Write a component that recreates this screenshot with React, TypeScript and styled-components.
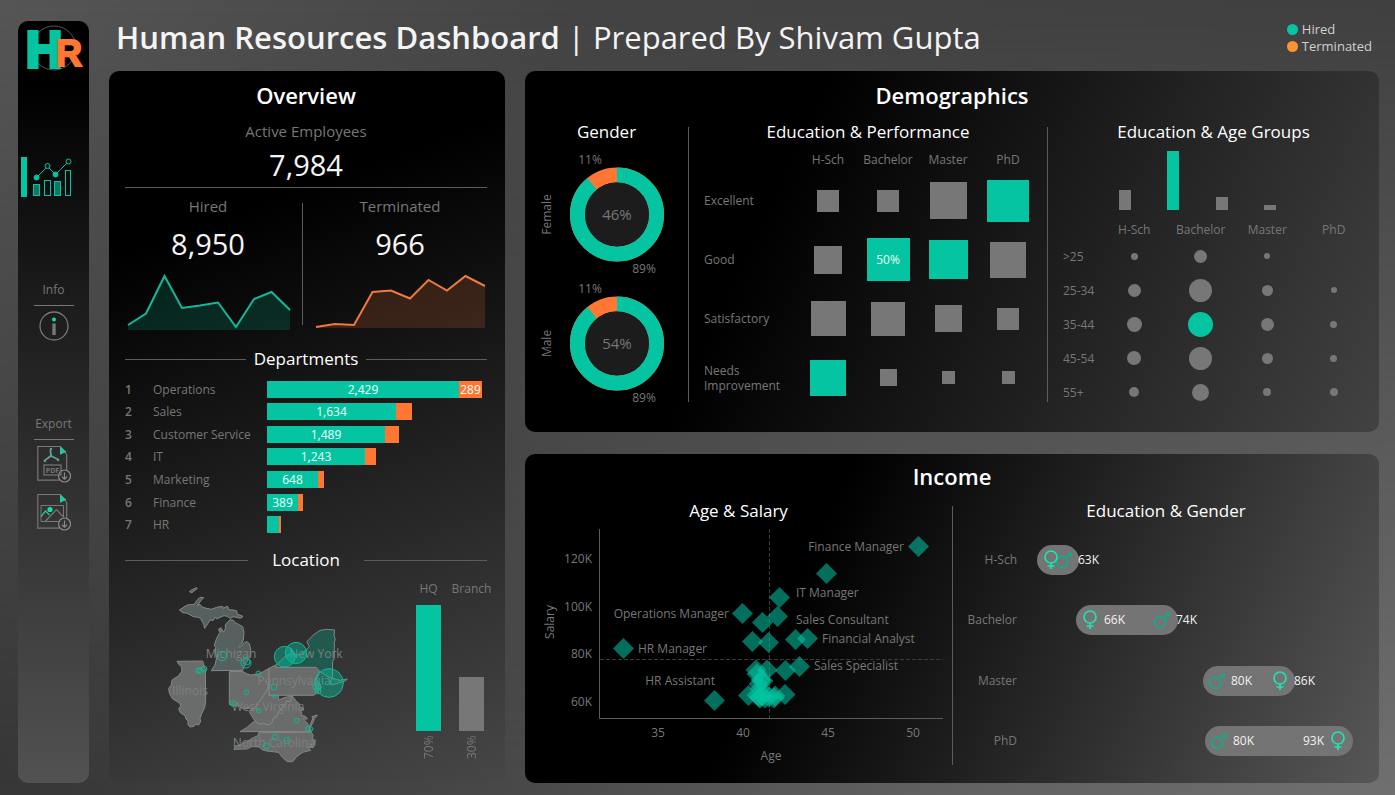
import React from "react";
import styled, { createGlobalStyle } from "styled-components";

const TEAL = "#04c4a1";
const ORANGE = "#ff7733";
const GREY = "#777777";
const RULE = "#5c5c5c";
const FONT = '"Open Sans", "Noto Sans", sans-serif';

const GlobalStyle = createGlobalStyle`
  *, *::before, *::after { box-sizing: border-box; }
  body {
    margin: 0;
    font-family: ${FONT};
    font-size: 12px;
    color: ${GREY};
    background: #444;
  }
  h1, h2, h3, p, ol, ul { margin: 0; padding: 0; font-weight: 400; }
  svg text { font-family: ${FONT}; }
`;

/* ---------- page frame ---------- */

const Page = styled.div`
  position: relative;
  display: grid;
  grid-template-columns: 71px minmax(0, 1fr);
  column-gap: 20px;
  min-height: 100vh;
  padding: 0 16px 12px 18px;
  background: linear-gradient(to right, #565656, #444 40%, #404040);
  isolation: isolate;

  &::before {
    content: "";
    position: absolute;
    inset: 0;
    z-index: -1;
    background: linear-gradient(to right, #363636, #484848 36%, #606060 65%, #707070);
    mask-image: linear-gradient(to bottom, transparent, #000);
  }
`;

const Main = styled.main`
  display: flex;
  flex-direction: column;
`;

const Header = styled.header`
  display: flex;
  justify-content: space-between;
  align-items: flex-start;
  height: 71px;
  padding: 0 7px;
`;

const PageTitle = styled.h1`
  font-size: 31px;
  line-height: 74px;
  color: #f4f4f4;
  white-space: nowrap;

  strong { font-weight: 600; }
`;

const Legend = styled.ul`
  list-style: none;
  padding-top: 21px;
`;

const LegendItem = styled.li<{ $color: string }>`
  display: flex;
  align-items: center;
  gap: 4px;
  line-height: 17px;
  font-size: 13px;
  color: #d0d0d0;

  &::before {
    content: "";
    width: 11px;
    height: 11px;
    border-radius: 50%;
    background: ${(p) => p.$color};
  }
`;

const Board = styled.div`
  flex: 1;
  display: grid;
  grid-template-columns: minmax(0, 396fr) minmax(0, 854fr);
  column-gap: 20px;
`;

const RightSide = styled.div`
  display: grid;
  grid-template-rows: 361fr 329fr;
  row-gap: 22px;
`;

const Panel = styled.section<{ $bg: string }>`
  display: flex;
  flex-direction: column;
  border-radius: 10px;
  background: ${(p) => p.$bg};
`;

const OverviewPanel = styled(Panel)`
  padding: 0 18px 0 16px;
`;

const PanelTitle = styled.h2<{ $line: number }>`
  font-size: 22px;
  font-weight: 600;
  line-height: ${(p) => p.$line}px;
  text-align: center;
  color: #fff;
`;

const SectionTitle = styled.h3`
  font-size: 17px;
  font-weight: 500;
  line-height: 26px;
  text-align: center;
  color: #fff;
`;

const PanelBody = styled.div<{ $columns: string }>`
  flex: 1;
  display: grid;
  grid-template-columns: ${(p) => p.$columns};
`;

const Divider = styled.div<{ $bottom: number }>`
  margin: 8px 0 ${(p) => p.$bottom}px;
  background: ${RULE};
`;

const Chart = styled.svg`
  display: block;
  width: 100%;
`;

/* ---------- sidebar ---------- */

const Sidebar = styled.nav`
  display: flex;
  flex-direction: column;
  align-items: center;
  margin-top: 21px;
  border-radius: 10px;
  background: linear-gradient(to bottom, #000 8%, #1a1a1a 35%, #2b2b2b 55%, #3c3c3c 75%, #525252);
`;

const LogoMark = styled.svg`
  display: block;
  overflow: visible;

  text {
    font-family: "Liberation Sans", sans-serif;
    font-weight: 700;
  }
`;

const IconButton = styled.button`
  display: block;
  padding: 0;
  border: 0;
  background: none;
  cursor: pointer;

  svg { display: block; }
`;

const NavButton = styled(IconButton)`
  align-self: stretch;
  display: flex;
  align-items: center;
  gap: 5px;
  margin: 78px 0 81px 3px;

  &::before {
    content: "";
    width: 6px;
    height: 40px;
    background: ${TEAL};
  }
`;

const NavLabel = styled.p`
  width: 40px;
  height: 28px;
  margin-bottom: 5px;
  border-bottom: 1px solid ${GREY};
  line-height: 23px;
  text-align: center;
`;

const NavGroup = styled.div`
  display: flex;
  flex-direction: column;
  align-items: center;
  margin-bottom: 71px;
`;

const ExportButtons = styled.div`
  display: grid;
  gap: 10px;
`;

/* ---------- overview ---------- */

const Kpi = styled.div`
  text-align: center;
`;

const KpiLabel = styled.p`
  font-size: 15px;
  line-height: 24px;
`;

const KpiValue = styled.p<{ $line: number }>`
  font-size: 29px;
  line-height: ${(p) => p.$line}px;
  color: #f5f5f5;
`;

const KpiSplit = styled.div`
  display: grid;
  grid-template-columns: minmax(0, 166fr) 22px minmax(0, 174fr);
  margin-bottom: 14px;
  padding-top: 6px;
  border-top: 1px solid ${RULE};
`;

const KpiDivider = styled.div`
  width: 1px;
  margin: 9px auto 6px;
  background: ${RULE};
`;

const RuledTitle = styled.h3<{ $gap: number }>`
  display: grid;
  grid-template-columns: 1fr auto 1fr;
  align-items: center;
  gap: ${(p) => p.$gap}px;
  font-size: 17px;
  font-weight: 500;
  line-height: 28px;
  color: #fff;

  &::before, &::after {
    content: "";
    height: 1px;
    background: ${RULE};
  }
`;

const Departments = styled.ol`
  display: grid;
  grid-auto-rows: 1fr;
  height: 158px;
  margin: 5px 0 10px;
  list-style: none;
`;

const Department = styled.li`
  display: grid;
  grid-template-columns: 28px 114px 1fr;
  align-items: center;
`;

const Rank = styled.span`
  font-weight: 600;
`;

const Bar = styled.div`
  display: flex;
  height: 17px;
  line-height: 17px;
`;

const Segment = styled.span<{ $color: string }>`
  background: ${(p) => p.$color};
  color: #f0fffb;
  text-align: center;
`;

const LocationRow = styled.div`
  display: grid;
  grid-template-columns: minmax(0, 1fr) 86px;
  margin-right: -6px;
`;

const SiteBars = styled.div`
  display: grid;
  grid-template-columns: 1fr 1fr;
  justify-items: center;
`;

const SiteColumn = styled.div`
  display: grid;
  grid-template-rows: 31px 126px 30px;
  justify-items: center;
  line-height: 29px;
`;

const SiteBar = styled.div<{ $color: string }>`
  align-self: end;
  width: 25px;
  background: ${(p) => p.$color};
`;

const SiteShare = styled.span`
  writing-mode: vertical-rl;
  transform: rotate(180deg);
  text-align: right;
  padding-bottom: 4px;
`;

/* ---------- demographics ---------- */

const Donuts = styled.div`
  margin-top: 5px;
`;

const PerformanceTable = styled.table`
  width: calc(100% - 24px);
  margin: 4px 9px 0 15px;
  border-collapse: collapse;
  table-layout: fixed;

  th, td { padding: 0; height: 59px; }
  th { font-weight: 400; text-align: left; line-height: 15px; }
  thead th { height: 22px; text-align: center; line-height: 22px; }
  thead th:first-child { width: 94px; }
`;

const Square = styled.div<{ $size: number; $active: boolean }>`
  width: ${(p) => p.$size}px;
  height: ${(p) => p.$size}px;
  margin: 0 auto;
  background: ${(p) => (p.$active ? TEAL : GREY)};
  color: #e6fff9;
  display: grid;
  place-items: center;
`;

const AgeBars = styled.div`
  display: grid;
  grid-template-columns: repeat(4, 1fr);
  align-items: end;
  justify-items: center;
  height: 65px;
  margin: 0 85px 0 53px;
`;

const AgeBar = styled.div<{ $height: number; $active: boolean }>`
  width: 12px;
  height: ${(p) => p.$height}px;
  background: ${(p) => (p.$active ? TEAL : GREY)};
`;

const AgeTable = styled.table`
  width: calc(100% - 27px);
  margin: 7px 12px 0 15px;
  border-collapse: collapse;
  table-layout: fixed;

  th, td { padding: 0; height: 34px; }
  th { font-weight: 400; text-align: left; }
  thead th { height: 22px; text-align: center; vertical-align: bottom; line-height: 18px; }
  thead th:first-child { width: 38px; }
`;

const Dot = styled.div<{ $size: number; $active: boolean }>`
  width: ${(p) => p.$size}px;
  height: ${(p) => p.$size}px;
  margin: 0 auto;
  border-radius: 50%;
  background: ${(p) => (p.$active ? TEAL : GREY)};
`;

/* ---------- data ---------- */

const hiredTrend = "128,325 146,313.5 164.5,276 182,308 200,305.5 218,302.5 236,327 254,299 271.5,292 290,310";
const firedTrend = "316,327 335,324 354,325 372.5,292 391,290.5 410,298.5 428.5,280 447,290.5 465.5,276 485,286";

const departments = [
  { name: "Operations", hired: 192, gone: 23, label: "2,429", goneLabel: "289" },
  { name: "Sales", hired: 129, gone: 16, label: "1,634" },
  { name: "Customer Service", hired: 118, gone: 14, label: "1,489" },
  { name: "IT", hired: 98, gone: 11, label: "1,243" },
  { name: "Marketing", hired: 51, gone: 6, label: "648" },
  { name: "Finance", hired: 31, gone: 5, label: "389" },
  { name: "HR", hired: 12, gone: 2, label: "" },
];

const levels = ["H-Sch", "Bachelor", "Master", "PhD"];

const performance = [
  { name: "Excellent", sizes: [22, 22, 37, 42], active: [3] },
  { name: "Good", sizes: [28, 43, 39, 36], active: [1, 2] },
  { name: "Satisfactory", sizes: [35, 34, 27, 22], active: [] },
  { name: "Needs Improvement", sizes: [36, 17, 13, 13], active: [0] },
] as { name: string; sizes: number[]; active: number[] }[];

const ages = [
  { name: ">25", sizes: [7, 13, 6, 0] },
  { name: "25-34", sizes: [13, 23, 11, 6] },
  { name: "35-44", sizes: [15, 25, 13, 7] },
  { name: "45-54", sizes: [14, 23, 11, 7] },
  { name: "55+", sizes: [10, 17, 8, 8] },
];

const jobs = [
  [918.5, 546.5], [826.5, 573.5], [779.5, 597.5], [742.5, 613.5], [762.5, 622.5], [777.5, 616.5],
  [752.5, 641.5], [768.5, 642.5], [795.5, 639.5], [807.5, 638.5], [623.5, 648.5], [799.5, 666.5],
  [785.5, 670.5], [767, 670], [714.5, 700.5], [785, 694.5], [748.5, 695.5], [756, 670], [757, 674],
  [761, 680], [763, 681], [759, 684], [760, 689], [757, 695], [759, 697], [760, 698], [762, 696],
  [765, 698], [769, 697], [774, 698], [775, 696],
];

const jobLabels = [
  { text: "Finance Manager", x: 904, y: 547, end: true },
  { text: "IT Manager", x: 796, y: 593 },
  { text: "Operations Manager", x: 729, y: 614, end: true },
  { text: "Sales Consultant", x: 796, y: 620 },
  { text: "Financial Analyst", x: 822, y: 639 },
  { text: "HR Manager", x: 638, y: 649 },
  { text: "Sales Specialist", x: 814, y: 666 },
  { text: "HR Assistant", x: 715, y: 681, end: true },
];

const salaryTicks = [
  { t: "120K", y: 563 },
  { t: "100K", y: 611 },
  { t: "80K", y: 658 },
  { t: "60K", y: 706 },
];

const pay = [
  { name: "H-Sch", y: 560, x: 1037, w: 42, f: 1051, m: 1064, labels: [{ t: "63K", x: 1078 }] },
  { name: "Bachelor", y: 620, x: 1076, w: 102, f: 1090, m: 1162, labels: [{ t: "66K", x: 1104 }, { t: "74K", x: 1176 }] },
  { name: "Master", y: 681, x: 1203, w: 92, f: 1280, m: 1217, labels: [{ t: "80K", x: 1231 }, { t: "86K", x: 1294 }] },
  { name: "PhD", y: 741, x: 1205, w: 148, f: 1338, m: 1219, labels: [{ t: "80K", x: 1233 }, { t: "93K", x: 1303 }] },
];

/* ---------- drawings ---------- */

const Logo = () => (
  <LogoMark width="62" height="58" viewBox="22 21 62 58" role="img" aria-label="HR">
    <circle cx="53" cy="48" r="22" fill="none" stroke="#555" />
    <text x="25" y="67" fontSize="50" fill={TEAL} stroke={TEAL} strokeWidth="4">H</text>
    <text x="55" y="66" fontSize="36" fill={ORANGE} stroke={ORANGE} strokeWidth="2">R</text>
  </LogoMark>
);

const AnalyticsIcon = () => (
  <svg width="40" height="40" viewBox="33 157 40 40" fill="none" stroke={TEAL}>
    <path d="M37.5 177.5 48.5 166.5 56.5 174.5 69.5 161.5" />
    <circle cx="37.5" cy="177.5" r="2.5" fill={TEAL} />
    <circle cx="48.5" cy="166" r="2.5" fill="#111" />
    <circle cx="56.5" cy="174.5" r="2.5" fill={TEAL} />
    <circle cx="69.5" cy="161.5" r="2.5" fill="#111" />
    <rect x="34.5" y="184.5" width="6" height="11" fill="#087a66" />
    <rect x="45.5" y="180.5" width="6" height="15" />
    <rect x="55.5" y="181.5" width="6" height="14" fill="#087a66" />
    <rect x="66.5" y="170.5" width="5" height="25" />
  </svg>
);

const InfoIcon = () => (
  <svg width="30" height="30" viewBox="0 0 30 30">
    <circle cx="15" cy="15" r="14" fill="none" stroke={GREY} strokeWidth="1.3" />
    <circle cx="15" cy="8.5" r="2" fill="#14d9ae" />
    <path d="M13.3 12.5h3.4V24h-3.4z" fill={GREY} />
  </svg>
);

const FileFrame = () => (
  <>
    <path d="M23.500 1.500H.8v33.700h21.500M23.500 1.500l6.200 8V25" fill="none" stroke={GREY} strokeWidth="1.2" />
    <path d="M23 1.500v8.300l6.500-3z" fill="#20c99f" />
    <circle cx="27.5" cy="31" r="6" fill="none" stroke="#8a8a8a" strokeWidth="1.2" />
    <path d="M27.5 27.5v6.5M25 31.8l2.5 2.4 2.5-2.4" fill="none" stroke="#8a8a8a" strokeWidth="1.2" />
  </>
);

const PdfIcon = () => (
  <svg width="34" height="38" viewBox="0 0 34 38">
    <FileFrame />
    <path d="M14 4c-1.5 1.5 0 3 0 6.5C12.5 13 8.500 13.5 7.5 16M14 10.5c2 2.5 5.5 2 7.5 4.5" fill="none" stroke="#5fa593" strokeWidth="1.8" />
    <circle cx="14" cy="4" r="1.2" fill="#5fa593" />
    <circle cx="7.8" cy="16" r="1.2" fill="#5fa593" />
    <circle cx="21" cy="15" r="1.2" fill="#5fa593" />
    <rect x="7" y="20" width="17" height="10" fill="none" stroke={GREY} strokeWidth="1.2" />
    <text x="15.5" y="27.5" fontSize="7" fontWeight="700" textAnchor="middle" fill={GREY}>PDF</text>
  </svg>
);

const ImageIcon = () => (
  <svg width="34" height="38" viewBox="0 0 34 38">
    <FileFrame />
    <path d="M22 28.5H4v-16h22.500v12" fill="none" stroke={GREY} />
    <path d="m8 28.5 11.5-12 6.5 7" fill="none" stroke={GREY} strokeWidth="1.2" />
    <path d="m4 23.5 4.5-5.500 4 4" fill="none" stroke="#20c99f" strokeWidth="1.2" />
    <circle cx="13" cy="16.5" r="2.6" fill="#20d9ae" />
  </svg>
);

const states = [
  "238,195 255,184 262,180 282,178 292,165 300,157 311,158 304,165 292,182 300,178 308,187 320,190 334,193 350,187 368,184 370,190 378,185 384,185 386,194 400,195 410,198 412,208 428,213 426,218 418,219 400,215 390,220 382,214 372,212 358,218 350,222 346,216 340,226 330,225 324,235 314,250 311,238 308,232 302,221 295,217 280,215 262,205 248,203",
  "268,140 274,135 290,128 292,130 276,143",
  "382,232 392,224 400,226 404,232 412,236 428,245 432,262 430,285 424,298 416,304 418,308 426,302 430,295 434,292 442,290 448,296 452,312 452,330 446,340 440,352 432,365 428,376 334,377 345,360 350,338 345,318 347,308 343,300 350,280 360,262 366,252 370,262 376,252 376,240",
  "356,252 364,248 358,260",
  "231,349 308,348 312,362 316,372 317,470 314,488 308,500 300,520 302,530 296,540 285,538 282,544 270,546 264,540 264,528 258,522 255,512 240,502 236,490 242,484 240,476 232,470 218,462 208,445 206,430 214,420 216,405 236,392 246,378 244,364 236,358",
  "388,380 428,379 440,386 452,390 470,388 490,380 507,370 507,412 502,435 490,452 480,468 470,478 468,488 455,494 448,490 430,492 418,484 404,482 388,478",
  "507,370 528,360 528,367 648,367 658,378 656,390 648,402 660,418 664,428 650,445 640,451 507,451",
  "507,412 507,451 536,451 536,466 552,458 566,455 574,452 582,462 572,470 560,468 550,488 535,500 530,515 520,520 516,532 508,540 490,536 480,538 466,530 455,512 448,500 452,494 468,488 470,478 480,468 490,452 502,435",
  "576,452 582,460 590,470 598,476 598,484 612,492 602,498 606,505 602,510 616,514 622,522 610,522 618,530 626,540 630,548 634,559 420,560 440,548 458,532 466,530 480,538 490,536 508,540 516,532 520,520 530,515 535,500 550,488 560,468 572,470",
  "636,515 652,510 644,520 640,530 632,545 630,540 638,522",
  "476,563 634,562 640,572 636,580 646,586 644,602 632,598 640,608 624,606 632,616 608,622 590,635 578,650 562,650 548,638 535,622 500,618 486,614 478,606 455,605 440,612 402,613 405,604 418,600 440,590 460,578 474,572",
];

const branches = [
  [366, 333, 14], [438, 354, 15], [440, 350, 10], [294, 377, 7], [300, 377, 9], [312, 372, 9], [475, 385, 7],
  [522, 426, 9], [439, 442, 7], [399, 475, 9], [523, 454, 5], [476, 497, 7], [590, 527, 7], [624, 551, 7],
  [633, 552, 6], [526, 577, 9], [560, 586, 9], [499, 603, 9], [554, 335, 31], [588, 324, 32], [687, 414, 43],
  [654, 438, 9], [646, 425, 8],
];

const stateLabels = [
  { t: "Michigan", x: 231, y: 654 },
  { t: "Illinois", x: 190, y: 691 },
  { t: "New York", x: 316, y: 654 },
  { t: "Pennsylvania", x: 294, y: 681 },
  { t: "West Virginia", x: 268, y: 707 },
  { t: "North Carolina", x: 274, y: 743 },
];

const LocationMap = () => (
  <Chart viewBox="125 574 282 200" role="img" aria-label="Branch locations by state">
    <g transform="translate(100 545) scale(0.33333)" stroke="#858887" strokeWidth="3" strokeLinejoin="round">
      {states.map((points, i) => (
        <polygon key={i} points={points} fill={i < 4 ? "#56615f" : "#6a6b6b"} />
      ))}
      <polygon
        points="528,367 528,360 545,345 555,335 575,326 600,330 616,318 628,305 621,290 640,270 660,256 680,253 704,255 702,270 706,285 703,290 703,340 698,350 697,400 720,406 742,402 738,407 716,414 694,420 690,408 697,400 685,396 668,385 658,378 648,367"
        fill="#205a4e"
      />
    </g>
    <g fontSize="12" textAnchor="middle" fill="#7d807f">
      {stateLabels.map((s) => (
        <text key={s.t} x={s.x} y={s.y + 4}>{s.t}</text>
      ))}
    </g>
    <g transform="translate(100 545) scale(0.33333)" stroke="#16b592" strokeWidth="3" fill={TEAL}>
      {branches.map(([x, y, r], i) => (
        <circle key={i} cx={x} cy={y} r={r} fillOpacity={r > 20 ? 0.42 : 0.08} />
      ))}
    </g>
  </Chart>
);

const Donut = ({ label, share }: { label: string; share: string }) => {
  const length = 2 * Math.PI * 39.5;
  return (
    <Chart viewBox="0 0 163 129" role="img" aria-label={`${label} ${share}`}>
      <g fill="none" strokeWidth="15" transform="rotate(-90 92 64.5)">
        <circle cx="92" cy="64.5" r="39.5" stroke={ORANGE} />
        <circle cx="92" cy="64.5" r="39.5" stroke={TEAL} strokeDasharray={`${length * 0.89} ${length}`} />
      </g>
      <circle cx="92" cy="64.5" r="32" fill="#1c1c1c" />
      <g fill={GREY} fontSize="12" textAnchor="middle">
        <text x="92" y="70" fontSize="15">{share}</text>
        <text x="65" y="14">11%</text>
        <text x="119" y="123">89%</text>
        <text transform="translate(26 64.5) rotate(-90)">{label}</text>
      </g>
    </Chart>
  );
};

const SalaryChart = () => (
  <Chart viewBox="525 524 427 251" role="img" aria-label="Age and salary by job title">
    <path d="M599.5 529v189.5H943" fill="none" stroke={RULE} />
    <path d="M769.5 529v189M600 659.5h343" fill="none" stroke="#3a3a3a" strokeDasharray="4 2" />
    <g fill={TEAL} fillOpacity="0.57">
      {jobs.map(([x, y], i) => (
        <path key={i} d={`M${x} ${y - 10.5}l10.5 10.5-10.5 10.5-10.5-10.5z`} />
      ))}
    </g>
    <g fill={GREY} fontSize="12">
      {jobLabels.map((l) => (
        <text key={l.text} x={l.x} y={l.y + 4} textAnchor={l.end ? "end" : "start"}>{l.text}</text>
      ))}
      {salaryTicks.map((tick) => (
        <text key={tick.t} x="592" y={tick.y} textAnchor="end">{tick.t}</text>
      ))}
      {["35", "40", "45", "50"].map((t, i) => (
        <text key={t} x={658 + i * 85} y="737" textAnchor="middle">{t}</text>
      ))}
      <text x="771" y="760" textAnchor="middle">Age</text>
      <text transform="translate(554 622) rotate(-90)" textAnchor="middle">Salary</text>
    </g>
  </Chart>
);

const Female = ({ x, y }: { x: number; y: number }) => (
  <g transform={`translate(${x} ${y})`} fill="none" stroke="#1fe3b4" strokeWidth="1.7">
    <circle cy="-3" r="6" />
    <path d="M0 3v6M-3.5 6h7" />
  </g>
);

const Male = ({ x, y }: { x: number; y: number }) => (
  <g transform={`translate(${x} ${y})`} fill="none" stroke="#1fa488" strokeWidth="2">
    <circle cx="-2" cy="2" r="5.5" />
    <path d="M2-2l4-4" />
    <path d="M2.5-7.5H8V-2z" fill="#1fa488" stroke="none" />
  </g>
);

const PayChart = () => (
  <Chart viewBox="953 524 426 251" role="img" aria-label="Income by education and gender">
    {pay.map((row) => (
      <g key={row.name} fontSize="12">
        <text x="1017" y={row.y + 4} textAnchor="end" fill={GREY}>{row.name}</text>
        <rect x={row.x} y={row.y - 15} width={row.w} height="30" rx="15" fill="#747474" />
        <Male x={row.m} y={row.y} />
        <Female x={row.f} y={row.y} />
        {row.labels.map((l) => (
          <text key={l.t} x={l.x} y={row.y + 4} fill="#f2f2f2">{l.t}</text>
        ))}
      </g>
    ))}
  </Chart>
);

/* ---------- app ---------- */

export default function App() {
  return (
    <>
      <GlobalStyle />
      <Page>
        <Sidebar aria-label="Dashboard">
          <Logo />
          <NavButton type="button" aria-label="Analytics">
            <AnalyticsIcon />
          </NavButton>
          <NavGroup>
            <NavLabel>Info</NavLabel>
            <IconButton type="button" aria-label="Info"><InfoIcon /></IconButton>
          </NavGroup>
          <NavGroup>
            <NavLabel>Export</NavLabel>
            <ExportButtons>
              <IconButton type="button" aria-label="Export PDF"><PdfIcon /></IconButton>
              <IconButton type="button" aria-label="Export image"><ImageIcon /></IconButton>
            </ExportButtons>
          </NavGroup>
        </Sidebar>
        <Main>
          <Header>
            <PageTitle><strong>Human Resources Dashboard</strong> | Prepared By Shivam Gupta</PageTitle>
            <Legend>
              <LegendItem $color={TEAL}>Hired</LegendItem>
              <LegendItem $color="#fd9333">Terminated</LegendItem>
            </Legend>
          </Header>
          <Board>
            <OverviewPanel $bg="linear-gradient(160deg, #000 22%, #474747)">
              <PanelTitle $line={48}>Overview</PanelTitle>
              <Kpi>
                <KpiLabel>Active Employees</KpiLabel>
                <KpiValue $line={44}>7,984</KpiValue>
              </Kpi>
              <KpiSplit>
                <Kpi>
                  <KpiLabel>Hired</KpiLabel>
                  <KpiValue $line={52}>8,950</KpiValue>
                  <Chart viewBox="125 270 166 61" aria-hidden="true">
                    <polygon points={`128,330 ${hiredTrend} 290,330`} fill={TEAL} fillOpacity="0.17" />
                    <polyline points={hiredTrend} fill="none" stroke="#16b896" strokeWidth="2" />
                  </Chart>
                </Kpi>
                <KpiDivider />
                <Kpi>
                  <KpiLabel>Terminated</KpiLabel>
                  <KpiValue $line={52}>966</KpiValue>
                  <Chart viewBox="313 270 174 61" aria-hidden="true">
                    <polygon points={`316,328 ${firedTrend} 485,328`} fill={ORANGE} fillOpacity="0.17" />
                    <polyline points={firedTrend} fill="none" stroke="#ee7a40" strokeWidth="2" />
                  </Chart>
                </Kpi>
              </KpiSplit>
              <RuledTitle $gap={8}>Departments</RuledTitle>
              <Departments>
                {departments.map((d, i) => (
                  <Department key={d.name}>
                    <Rank>{i + 1}</Rank>
                    <span>{d.name}</span>
                    <Bar>
                      <Segment $color={TEAL} style={{ width: `${(d.hired / 220) * 100}%` }}>{d.label}</Segment>
                      <Segment $color={ORANGE} style={{ width: `${(d.gone / 220) * 100}%` }}>{d.goneLabel}</Segment>
                    </Bar>
                  </Department>
                ))}
              </Departments>
              <RuledTitle $gap={24}>Location</RuledTitle>
              <LocationRow>
                <LocationMap />
                <SiteBars>
                  <SiteColumn>
                    <span>HQ</span>
                    <SiteBar $color={TEAL} style={{ height: "100%" }} />
                    <SiteShare>70%</SiteShare>
                  </SiteColumn>
                  <SiteColumn>
                    <span>Branch</span>
                    <SiteBar $color={GREY} style={{ height: "43%" }} />
                    <SiteShare>30%</SiteShare>
                  </SiteColumn>
                </SiteBars>
              </LocationRow>
            </OverviewPanel>
            <RightSide>
              <Panel $bg="linear-gradient(115deg, #000 30%, #424242)">
                <PanelTitle $line={48}>Demographics</PanelTitle>
                <PanelBody $columns="minmax(0, 163fr) 1px minmax(0, 358fr) 1px minmax(0, 331fr)">
                  <div>
                    <SectionTitle>Gender</SectionTitle>
                    <Donuts>
                      <Donut label="Female" share="46%" />
                      <Donut label="Male" share="54%" />
                    </Donuts>
                  </div>
                  <Divider $bottom={30} />
                  <div>
                    <SectionTitle>Education &amp; Performance</SectionTitle>
                    <PerformanceTable>
                      <thead>
                        <tr>
                          <th aria-label="Performance" />
                          {levels.map((l) => <th key={l} scope="col">{l}</th>)}
                        </tr>
                      </thead>
                      <tbody>
                        {performance.map((row) => (
                          <tr key={row.name}>
                            <th scope="row">{row.name}</th>
                            {row.sizes.map((size, i) => (
                              <td key={i}>
                                <Square $size={size} $active={row.active.includes(i)}>{size === 43 ? "50%" : null}</Square>
                              </td>
                            ))}
                          </tr>
                        ))}
                      </tbody>
                    </PerformanceTable>
                  </div>
                  <Divider $bottom={30} />
                  <div>
                    <SectionTitle>Education &amp; Age Groups</SectionTitle>
                    <AgeBars>
                      {[20, 59, 13, 5].map((h, i) => <AgeBar key={i} $height={h} $active={i === 1} />)}
                    </AgeBars>
                    <AgeTable>
                      <thead>
                        <tr>
                          <th aria-label="Age group" />
                          {levels.map((l) => <th key={l} scope="col">{l}</th>)}
                        </tr>
                      </thead>
                      <tbody>
                        {ages.map((row) => (
                          <tr key={row.name}>
                            <th scope="row">{row.name}</th>
                            {row.sizes.map((size, i) => (
                              <td key={i}><Dot $size={size} $active={size === 25} /></td>
                            ))}
                          </tr>
                        ))}
                      </tbody>
                    </AgeTable>
                  </div>
                </PanelBody>
              </Panel>
              <Panel $bg="linear-gradient(115deg, #000 33%, #575757)">
                <PanelTitle $line={44}>Income</PanelTitle>
                <PanelBody $columns="minmax(0, 427fr) 1px minmax(0, 426fr)">
                  <div>
                    <SectionTitle>Age &amp; Salary</SectionTitle>
                    <SalaryChart />
                  </div>
                  <Divider $bottom={18} />
                  <div>
                    <SectionTitle>Education &amp; Gender</SectionTitle>
                    <PayChart />
                  </div>
                </PanelBody>
              </Panel>
            </RightSide>
          </Board>
        </Main>
      </Page>
    </>
  );
}
